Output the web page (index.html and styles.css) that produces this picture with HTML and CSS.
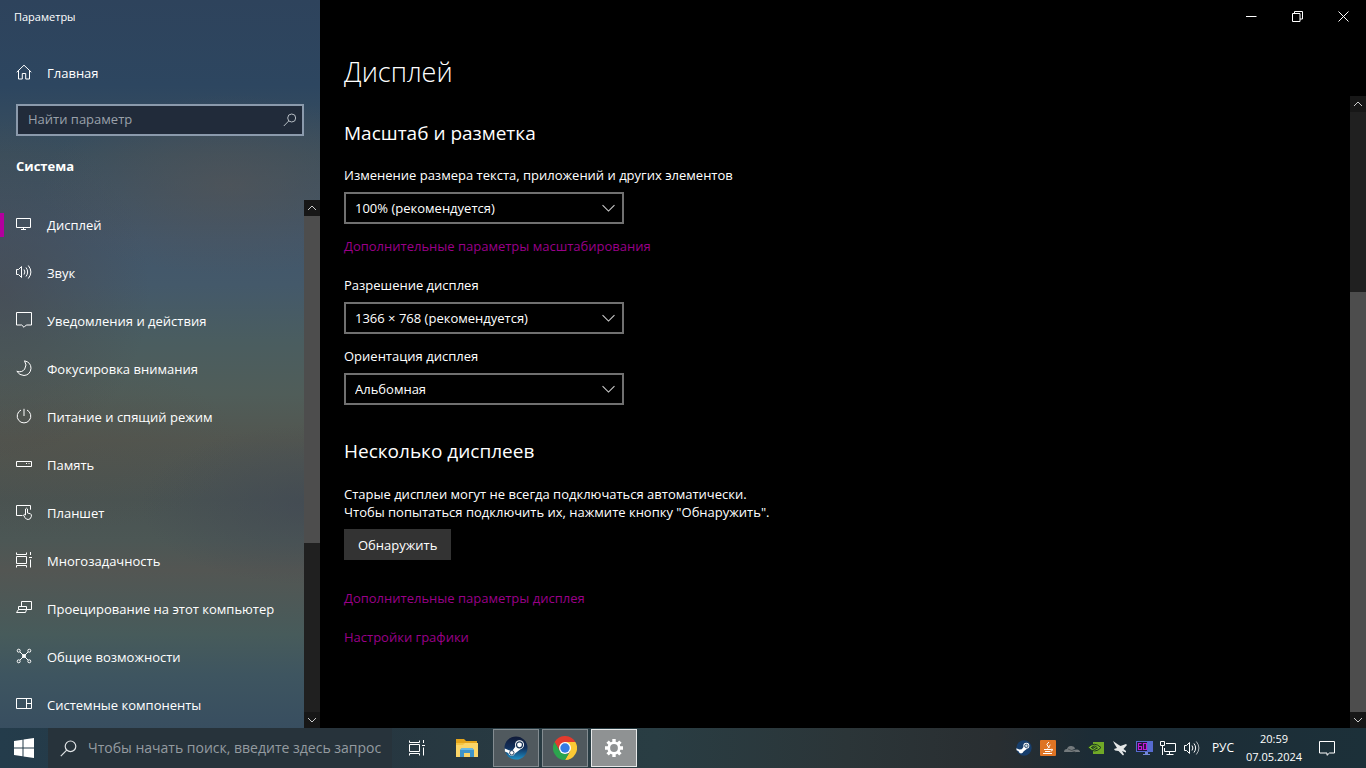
FILE: index.html
```html
<!DOCTYPE html>
<html lang="ru">
<head>
<meta charset="utf-8">
<meta name="viewport" content="width=device-width, initial-scale=1">
<title>Параметры</title>
<link rel="stylesheet" href="styles.css">
</head>
<body>
<div class="window">
  <aside class="sidebar">
    <div class="app-title">Параметры</div>
    <a class="nav-item home" href="#home">
      <svg class="icon" viewBox="0 0 16 16"><path d="M.7 8.200 8 1.200l7.300 7M2.500 6.700V15h3.800V9.500h3.400V15h3.800V6.700"/></svg>
      <span>Главная</span>
    </a>
    <form class="search">
      <input type="text" placeholder="Найти параметр" aria-label="Найти параметр">
      <svg class="search-icon" viewBox="0 0 14 14"><circle cx="8.700" cy="5" r="4"/><path d="M5.800 7.900.8 13"/></svg>
    </form>
    <h2 class="section-name">Система</h2>
    <div class="nav-area">
      <nav class="nav-list">
        <a class="nav-item current" href="#display"><svg class="icon" viewBox="0 0 16 16"><path d="M.5 2.500h14v9H.5zM7.500 11.500v2M5 13.500h5"/></svg><span>Дисплей</span></a>
        <a class="nav-item" href="#sound"><svg class="icon" viewBox="0 0 16 16"><path d="M.5 5.500h2L5.500 2.500v11l-3-3h-2zM8 5.500q1.800 2.500 0 5M10 3.500q3.300 4.500 0 9M12.300 1.500q5.200 6.500 0 13"/></svg><span>Звук</span></a>
        <a class="nav-item" href="#notify"><svg class="icon" viewBox="0 0 16 16"><path d="M.5.5h15v12.500h-5.200L8 15.300 5.700 13H.5z"/></svg><span>Уведомления и действия</span></a>
        <a class="nav-item" href="#focus"><svg class="icon" viewBox="0 0 16 16"><path d="M8.500.8Q15 2.300 15 8.300 14.300 15 8 15.500 3.500 15.400.8 11.300 6 13 8.700 9T8.500.8z"/></svg><span>Фокусировка внимания</span></a>
        <a class="nav-item" href="#power"><svg class="icon" viewBox="0 0 16 16"><path d="M8 .8V8M5 2a6.800 6.800 0 1 0 6 0"/></svg><span>Питание и спящий режим</span></a>
        <a class="nav-item" href="#storage"><svg class="icon" viewBox="0 0 16 16"><path d="M.5 5.500h15v5H.5zM10 7.500h1M12.500 7.500h1"/></svg><span>Память</span></a>
        <a class="nav-item" href="#tablet"><svg class="icon" viewBox="0 0 16 16"><path d="M6.500 11.500h-6v-10h14v4.200M9.500 11V5q1-1.600 2 0v4l3 .8q1.200.5.900 2.500-.7 3.200-3.200 3.200-2.100 0-3.200-1.800L7.500 11q.8-1.300 2 0"/></svg><span>Планшет</span></a>
        <a class="nav-item" href="#multi"><svg class="icon" viewBox="0 0 16 16"><path d="M.5.5v2h10v-2M.5 15.500v-2h10v2M.5 4.500h10v7H.5zM14.500 0v3M14.500 7.500v8M13 5.500h3"/></svg><span>Многозадачность</span></a>
        <a class="nav-item" href="#project"><svg class="icon" viewBox="0 0 16 16"><path d="M5.500 6.500v-5h10v8h-5M2.500 9.500v-3h8v3M2.500 9.500l-2 3h9l1-3z"/></svg><span>Проецирование на этот компьютер</span></a>
        <a class="nav-item" href="#shared"><svg class="icon" viewBox="0 0 16 16"><path d="m4 4 8 8M12 4 4 12"/><circle cx="2.700" cy="2.700" r="1.500"/><circle cx="13.300" cy="2.700" r="1.500"/><circle cx="2.700" cy="13.300" r="1.500"/><circle cx="13.300" cy="13.300" r="1.500"/><circle cx="8" cy="8" r="1.500"/></svg><span>Общие возможности</span></a>
        <a class="nav-item" href="#components"><svg class="icon" viewBox="0 0 16 16"><path d="M.5 2.500h15v10H.5zM10.500 2.500v10M10.500 7.500h5"/></svg><span>Системные компоненты</span></a>
      </nav>
      <div class="scrollbar nav-scroll">
        <button type="button" aria-label="Прокрутить вверх"><svg viewBox="0 0 10 6"><path d="m1 5 4-4 4 4"/></svg></button>
        <div class="track"><div class="thumb"></div></div>
        <button type="button" aria-label="Прокрутить вниз"><svg viewBox="0 0 10 6"><path d="m1 1 4 4 4-4"/></svg></button>
      </div>
    </div>
  </aside>
  <div class="content">
    <div class="caption">
      <button type="button" aria-label="Свернуть"><svg viewBox="0 0 11 11"><path d="M0 5.500h10.500"/></svg></button>
      <button type="button" aria-label="Свернуть в окно"><svg viewBox="0 0 11 11"><path d="M.5 2.500h7.500v8H.5zM2.500 2.500v-2h8V8H8"/></svg></button>
      <button type="button" aria-label="Закрыть"><svg viewBox="0 0 11 11"><path d="m.5.5 10 10M10.500.5l-10 10"/></svg></button>
    </div>
    <h1>Дисплей</h1>
    <div class="scroll-area">
      <main>
        <section>
          <h2>Масштаб и разметка</h2>
          <div class="field">
            <label for="scale">Изменение размера текста, приложений и других элементов</label>
            <div class="select"><select id="scale"><option>100% (рекомендуется)</option></select><svg viewBox="0 0 12 7"><path d="m.5.8 5.500 5.500L11.500.8"/></svg></div>
          </div>
          <a class="link scale-link" href="#scaling">Дополнительные параметры масштабирования</a>
          <div class="field">
            <label for="resolution">Разрешение дисплея</label>
            <div class="select"><select id="resolution"><option>1366 × 768 (рекомендуется)</option></select><svg viewBox="0 0 12 7"><path d="m.5.8 5.500 5.500L11.500.8"/></svg></div>
          </div>
          <div class="field">
            <label for="orientation">Ориентация дисплея</label>
            <div class="select"><select id="orientation"><option>Альбомная</option></select><svg viewBox="0 0 12 7"><path d="m.5.8 5.500 5.500L11.500.8"/></svg></div>
          </div>
        </section>
        <section class="multiple">
          <h2>Несколько дисплеев</h2>
          <p>Старые дисплеи могут не всегда подключаться автоматически.<br>Чтобы попытаться подключить их, нажмите кнопку "Обнаружить".</p>
          <button class="detect" type="button">Обнаружить</button>
          <a class="link" href="#advanced">Дополнительные параметры дисплея</a>
          <a class="link" href="#graphics">Настройки графики</a>
        </section>
      </main>
      <div class="scrollbar page-scroll">
        <button type="button" aria-label="Прокрутить вверх"><svg viewBox="0 0 10 6"><path d="m1 5 4-4 4 4"/></svg></button>
        <div class="track"><div class="thumb"></div></div>
        <button type="button" aria-label="Прокрутить вниз"><svg viewBox="0 0 10 6"><path d="m1 1 4 4 4-4"/></svg></button>
      </div>
    </div>
  </div>
</div>
<footer class="taskbar">
  <button class="start" type="button" aria-label="Пуск"><svg viewBox="0 0 20 20"><path d="M0 3 8.500 1.800v7.700H0zM9.500 1.600 20 0v9.500H9.500zM0 10.500h8.500v7.700L0 17zM9.500 10.500H20V20L9.500 18.400z"/></svg></button>
  <label class="task-search">
    <svg viewBox="0 0 17 17"><circle cx="10.500" cy="6.300" r="5.300"/><path d="M6.700 10.200.8 16.200"/></svg>
    <input type="text" placeholder="Чтобы начать поиск, введите здесь запрос" aria-label="Поиск">
  </label>
  <div class="apps">
    <button class="task-view" type="button" aria-label="Представление задач"><svg class="line" width="16" height="16" viewBox="0 0 16 16"><path d="M.5.5v2h10v-2M.5 15.500v-2h10v2M.5 4.500h10v7H.5zM14.500 0v3M14.500 7.500v8M13 5.500h3"/></svg></button>
    <button type="button" aria-label="Проводник"><svg width="24" height="20" viewBox="0 0 24 20"><path fill="#e5a51b" d="M1 1h8l2 2h11v5H1z"/><path fill="#fbd568" d="M1 5h22v14H1z"/><path fill="#f5c542" d="M1 5h9l-2 2H1z"/><path fill="#3f94c9" d="M5 19v-7l2-2h10l2 2v7h-4v-4H9v4z"/><path fill="#69b9e4" d="M7 10h10l2 2H5z"/></svg></button>
    <button class="open" type="button" aria-label="Steam"><svg width="24" height="24" viewBox="0 0 24 24"><defs><linearGradient id="steam" x2="0" y2="1"><stop stop-color="#101a38"/><stop offset=".5" stop-color="#12305c"/><stop offset="1" stop-color="#1d91c7"/></linearGradient></defs><circle cx="12" cy="12" r="11.500" fill="url(#steam)"/><path d="m.8 12.500 7 3 4-5.500 5 3-5.800 4.500A3.500 3.500 0 0 1 4.300 17L.9 15.500z" fill="#fff"/><circle cx="15.500" cy="8.800" r="4.500" fill="#fff"/><circle cx="15.500" cy="8.800" r="3" fill="#fff" stroke="#193457" stroke-width="1.200"/><circle cx="7.800" cy="16.800" r="2.200" fill="#fff" stroke="#193457" stroke-width=".9"/></svg></button>
    <button class="open" type="button" aria-label="Google Chrome"><svg width="24" height="24" viewBox="0 0 24 24"><path fill="#e33b2e" d="M12 12V6h10.400A12 12 0 0 0 1.600 6l5.200 9z"/><path fill="#fcc934" d="M12 6h10.400A12 12 0 0 1 12 24l5.200-9z"/><path fill="#2ca44e" d="M1.600 6 6.800 15 12 18h3.500L12 24A12 12 0 0 1 1.600 6z"/><circle cx="12" cy="12" r="6" fill="#fff"/><circle cx="12" cy="12" r="4.700" fill="#347be5"/></svg></button>
    <button class="open active" type="button" aria-label="Параметры"><svg width="20" height="20" viewBox="0 0 20 20"><g stroke="#fff" stroke-width="3.400"><path d="M10 1v18M1 10h18M3.600 3.600l12.800 12.800M16.400 3.600 3.600 16.400"/></g><circle cx="10" cy="10" r="6.600" fill="#fff"/><circle cx="10" cy="10" r="3.900" fill="#8f9293"/></svg></button>
  </div>
  <div class="tray">
    <button type="button" aria-label="Steam"><svg width="16" height="16" viewBox="0 0 24 24"><circle cx="12" cy="12" r="11.500" fill="#173e6c"/><path d="m.5 12.500 7 3 4-5.500 5 3-5.800 4.500A3.500 3.500 0 0 1 4.300 17L.9 15.500z" fill="#fff"/><circle cx="15.500" cy="8.800" r="4.500" fill="#fff"/><circle cx="15.500" cy="8.800" r="2.600" fill="#c5dce9" stroke="#193457" stroke-width="1.200"/><circle cx="7.500" cy="17" r="3.200" fill="#fff"/></svg></button>
    <button type="button" aria-label="Java"><svg width="16" height="16" viewBox="0 0 16 16"><rect width="16" height="16" rx="1" fill="#de7424"/><path d="M9 2Q5.500 4.500 7.700 6T7.500 8.500M10.500 5Q8.300 6 9 8M4 9.500h7M5 11.500h5M3 13.500h9M11 9.300q2.500-.5 1.200 1.300l-1.700.7" fill="none" stroke="#fff" stroke-width="1"/></svg></button>
    <button type="button" aria-label="OneDrive"><svg width="16" height="16" viewBox="0 0 16 16"><path fill="#747a7d" d="M0 12q0-3 3-3 1-3.500 4.500-3 3 .2 3.700 2.600L8 10l5-.5q3 .5 3 2.500z"/><path d="m4 9 7.500 3" stroke="#4b5255"/></svg></button>
    <button type="button" aria-label="NVIDIA"><svg width="16" height="16" viewBox="0 0 16 16"><path fill="#71a927" d="M5 2h11v12H5z"/><path d="M0 7.500q6-6.500 13 0-6 7-13 0z" fill="#77b52a" stroke="#203a21"/><path d="M3 8q3.500-4 6.500 0-3 3-5.500 0 2-2 3.500 0" fill="none" stroke="#203a21"/></svg></button>
    <button type="button" aria-label="Самолёт"><svg width="16" height="16" viewBox="0 0 16 16"><path fill="#e4e7e7" d="m1 1 5 3.500L8.500 6 14 4l1 1-3.500 4 2.500 2v1.500L10 11l2 3.500-1 1L6.500 11 3 10.500 2 9l3-1L2.500 4z"/></svg></button>
    <button type="button" aria-label="60 кадров"><svg width="17" height="16" viewBox="0 0 17 16"><path fill="#566bd0" d="M0 1h17v11H0z"/><path fill="#201535" d="M1 2h10v9H1z"/><path d="M5.500 3.500h-3v6h3v-3h-3M7.500 3.500h3v6h-3z" fill="none" stroke="#c21bd9" stroke-width="1.200"/><path fill="#7488d8" d="M9 12h3v2h2v1H7v-1h2z"/></svg></button>
    <button type="button" aria-label="Сеть"><svg class="line" width="16" height="16" viewBox="0 0 16 16"><path d="M6 3.500h9.500v8h-11V8M.5 1.500h4v4h-4zM2.500 5.500V15M6.500 14.500h7M9.500 11.500v3"/></svg></button>
    <button type="button" aria-label="Громкость"><svg class="line" width="16" height="16" viewBox="0 0 16 16"><path d="M.5 5.500h2L5.500 2.500v11l-3-3h-2zM8 5.500q1.800 2.500 0 5M10 3.500q3.300 4.500 0 9"/><path opacity=".65" d="M12.300 1.500q5.200 6.500 0 13"/></svg></button>
  </div>
  <button class="lang" type="button">РУС</button>
  <button class="clock" type="button"><span>20:59</span><span>07.05.2024</span></button>
  <button class="action" type="button" aria-label="Центр уведомлений"><svg class="line" width="16" height="16" viewBox="0 0 16 16"><path d="M.5 1.500h15V13h-5L8 15.300V13H.5z"/></svg></button>
</footer>
</body>
</html>
```
FILE: styles.css
```css
* { box-sizing: border-box; }
body {
  margin: 0;
  height: 100vh;
  display: flex;
  flex-direction: column;
  overflow: hidden;
  background: #000;
  color: #fff;
  font-family: "Open Sans", "Noto Sans", sans-serif;
  font-size: 13px;
  line-height: 18px;
}
button, input, select { font: inherit; color: inherit; border-radius: 0; }
button { border: 0; padding: 0; background: none; display: flex; align-items: center; justify-content: center; }
h1, h2, p { margin: 0; font-weight: 400; }
a { color: inherit; text-decoration: none; }
svg { flex: none; }

.window { flex: 1; min-height: 0; display: flex; }
.sidebar {
  width: 320px;
  flex: none;
  display: flex;
  flex-direction: column;
  background:
    radial-gradient(190px 90px at 230px 185px, #56555599, #56555500),
    radial-gradient(170px 80px at 310px 505px, #40475499, #40475400),
    radial-gradient(150px 170px at 0 290px, #48484d99, #48484d00),
    radial-gradient(200px 90px at 40px 445px, #52504866, #52504800),
    linear-gradient(#2e435c 0, #2d4660 85px, #3b4f5d 155px, #42566a 240px, #44596a 285px, #4a5d60 340px, #505d59 395px, #525650 440px, #495352 500px, #4c5755 540px, #535653 570px, #475b5b 635px, #3e5560 675px, #384e60 728px);
}
.app-title { height: 33px; padding: 8px 14px; font-size: 11px; line-height: 17px; }
.home { margin-top: 16px; }
.search { margin: 7px 16px 0; position: relative; display: flex; }
.search input {
  width: 100%;
  height: 32px;
  padding: 0 32px 2px 10px;
  border: 2px solid #8b9aac;
  background: #212b3a;
  outline: 0;
}
.search input::placeholder { color: #9aa1aa; opacity: 1; }
.search-icon { position: absolute; right: 7px; top: 9px; width: 14px; height: 14px; fill: none; stroke: #b6bdc4; }
.section-name { margin: 21px 16px 25px; font-size: 13px; font-weight: 700; }
.nav-area { flex: 1; min-height: 0; display: flex; }
.nav-list { flex: 1; min-width: 0; overflow: hidden; padding-top: 1px; }
.nav-item { height: 48px; padding: 0 16px; display: flex; align-items: center; gap: 15px; white-space: nowrap; }
.current { background: linear-gradient(#b4009e, #b4009e) 0 50% / 4px 24px no-repeat; }
.icon { width: 16px; height: 16px; margin-bottom: 2px; fill: none; stroke: #fff; stroke-width: 1; }

.scrollbar { width: 16px; flex: none; display: flex; flex-direction: column; background: #202020; }
.scrollbar button { height: 16px; background: #171717; }
.scrollbar svg { width: 10px; height: 6px; fill: none; stroke: #ccc; }
.track { flex: 1; display: flex; flex-direction: column; }
.thumb { background: #4d4d4d; }
.nav-scroll .thumb { height: 66%; }
.page-scroll .track { justify-content: flex-end; }
.page-scroll .thumb { height: 70%; }

.content { flex: 1; min-width: 0; display: flex; flex-direction: column; }
.caption { display: flex; justify-content: flex-end; }
.caption button { width: 46px; height: 32px; }
.caption svg { width: 11px; height: 11px; fill: none; stroke: #fff; }
h1 { margin: 20px 24px 4px; font-size: 27px; font-weight: 300; line-height: 40px; }
.scroll-area { flex: 1; min-height: 0; display: flex; }
main { flex: 1; min-width: 0; padding: 23px 24px 0; overflow: hidden; }
main h2 { font-size: 19px; line-height: 28px; }
section { display: flex; flex-direction: column; align-items: flex-start; }
.field { margin-top: 13px; display: flex; flex-direction: column; gap: 8px; }
.field:first-of-type { margin-top: 19px; }
.select { position: relative; width: 280px; }
.select select {
  appearance: none;
  display: block;
  width: 100%;
  height: 32px;
  padding: 0 32px 0 9px;
  border: 2px solid #707070;
  background: #000;
}
.select svg { position: absolute; right: 9px; top: 12px; width: 13px; height: 8px; fill: none; stroke: #ccc; pointer-events: none; }
.link { color: #9a0089; }
.scale-link { margin: 13px 0 8px; }
.multiple { margin-top: 32px; }
.multiple p { margin: 20px 0 8px; }
.detect { height: 31px; padding: 0 14px; background: #333; }
.multiple .link { margin-top: 29px; }
.multiple .link + .link { margin-top: 21px; }

.taskbar {
  height: 40px;
  flex: none;
  display: flex;
  background: linear-gradient(90deg, #243c4b 0, #263640 25%, #293d43 48%, #2b3538 62%, #292e31 73%, #1c2c36 80%, #1c3039 100%);
}
.start { width: 48px; }
.start svg { width: 20px; height: 20px; fill: #fff; }
.task-search { width: 344px; display: flex; align-items: center; gap: 8px; padding: 0 0 0 12px; background: #27333b; }
.task-search svg { width: 17px; height: 17px; fill: none; stroke: #e0e3e5; stroke-width: 1.200; }
.task-search input { flex: 1; min-width: 0; padding: 0 0 0 3px; border: 0; background: none; outline: 0; font-size: 14px; }
.task-search input::placeholder { color: #949ba0; opacity: 1; }
.apps { display: flex; gap: 3px; }
.apps button { width: 46px; margin: 1px 0; }
.apps .task-view { width: 49px; }
.apps .open { border: 1px solid #838c91; background: #50595e; }
.apps .active { border-color: #e6e8e8; background: #8f9293; }
.line { fill: none; stroke: #fff; }
.tray { margin-left: auto; display: flex; }
.tray button { width: 24px; }
.lang { width: 38px; font-size: 12px; }
.clock { width: 64px; flex-direction: column; font-size: 11px; white-space: nowrap; }
.action { width: 42px; margin-right: 18px; }
```
